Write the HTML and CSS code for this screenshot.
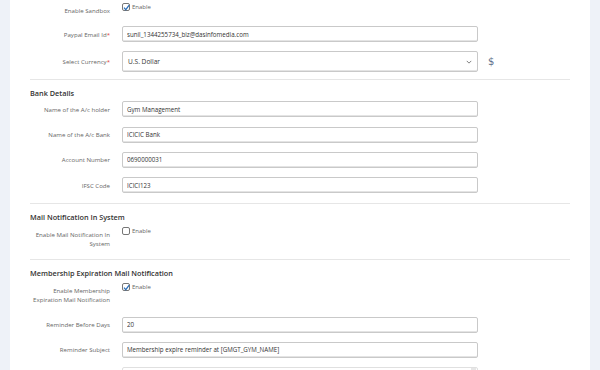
FILE: index.html
```html
<!DOCTYPE html>
<html>
<head>
<meta charset="utf-8">
<link rel="stylesheet" href="styles.css">
</head>
<body>
<div class="page">
  <div class="panel">
    <div class="row row-top">
      <label class="lbl lbl-low">Enable Sandbox</label>
      <div class="check"><span class="box checked"><svg viewBox="0 0 10 10"><path d="M2.2 5.2 L4.2 7.4 L8 2.4" /></svg></span><span class="ctext">Enable</span></div>
    </div>
    <div class="row">
      <label class="lbl">Paypal Email Id<span class="req">*</span></label>
      <div class="ctl"><input class="inp" type="text" value="sunil_1344255734_biz@dasinfomedia.com"></div>
    </div>
    <div class="row row-select">
      <label class="lbl">Select Currency<span class="req">*</span></label>
      <div class="ctl"><div class="sel"><span>U.S. Dollar</span><svg class="chev" viewBox="0 0 8 5"><path d="M1 1 L4 4 L7 1"/></svg></div></div>
      <span class="dollar">$</span>
    </div>
    <div class="sep"></div>
    <h3 class="head">Bank Details</h3>
    <div class="row">
      <label class="lbl">Name of the A/c holder</label>
      <div class="ctl"><input class="inp" type="text" value="Gym Management"></div>
    </div>
    <div class="row">
      <label class="lbl">Name of the A/c Bank</label>
      <div class="ctl"><input class="inp" type="text" value="ICICIC Bank"></div>
    </div>
    <div class="row">
      <label class="lbl">Account Number</label>
      <div class="ctl"><input class="inp" type="text" value="0690000031"></div>
    </div>
    <div class="row">
      <label class="lbl">IFSC Code</label>
      <div class="ctl"><input class="inp" type="text" value="ICICI123"></div>
    </div>
    <div class="sep"></div>
    <h3 class="head">Mail Notification In System</h3>
    <div class="row row-check2">
      <label class="lbl lbl-two">Enable Mail Notification In System</label>
      <div class="check check2"><span class="box"></span><span class="ctext">Enable</span></div>
    </div>
    <div class="sep"></div>
    <h3 class="head">Membership Expiration Mail Notification</h3>
    <div class="row row-check2 row-check3">
      <label class="lbl lbl-two">Enable Membership Expiration Mail Notification</label>
      <div class="check check2"><span class="box checked"><svg viewBox="0 0 10 10"><path d="M2.2 5.2 L4.2 7.4 L8 2.4" /></svg></span><span class="ctext">Enable</span></div>
    </div>
    <div class="row">
      <label class="lbl">Reminder Before Days</label>
      <div class="ctl"><input class="inp" type="text" value="20"></div>
    </div>
    <div class="row">
      <label class="lbl">Reminder Subject</label>
      <div class="ctl"><input class="inp" type="text" value="Membership expire reminder at [GMGT_GYM_NAME]"></div>
    </div>
    <div class="row row-area">
      <label class="lbl"></label>
      <div class="ctl"><div class="area"><span class="scroll"></span></div></div>
    </div>
  </div>
</div>
</body>
</html>
```

FILE: styles.css
```css
* { box-sizing: border-box; }
html, body { margin: 0; padding: 0; }
body {
  background: #eef2f8;
  font-family: "Open Sans", "Liberation Sans", sans-serif;
  color: #333;
  width: 600px;
  height: 370px;
  overflow: hidden;
}
.page { padding-left: 10px; width: 590px; }
.panel {
  background: #fff;
  width: 580px;
  height: 370px;
  overflow: hidden;
  padding: 0 20px;
}
.row {
  display: flex;
  align-items: center;
  height: 16px;
  margin-bottom: 9.33px;
}
.row-top {
  height: 17px;
  margin-bottom: 9px;
  align-items: flex-start;
}
.row-top .check { margin-top: 2px; }
.lbl {
  width: 92px;
  flex: 0 0 92px;
  padding-right: 12px;
  text-align: right;
  font-size: 6.1px;
  color: #666;
  line-height: 9px;
}
.lbl-low { padding-top: 6px; }
.req { color: #e0413a; }
.ctl { width: 356px; flex: 0 0 356px; }
.inp {
  display: block;
  width: 100%;
  height: 16px;
  border: 1px solid #c9c9c9;
  border-radius: 2px;
  padding: 0 4px;
  font-family: inherit;
  font-size: 6.2px;
  color: #333;
  background: #fff;
  outline: none;
  box-shadow: inset 0 -1px 0 #e4e4e4;
}
.row-select { height: 21px; margin-bottom: 7px; }
.sel {
  height: 21px;
  border: 1px solid #c9c9c9;
  border-radius: 2px;
  display: flex;
  align-items: center;
  justify-content: space-between;
  padding: 0 5px;
  font-size: 6.6px;
  color: #333;
  box-shadow: inset 0 -1px 0 #e4e4e4;
}
.chev { width: 6px; height: 4px; fill: none; stroke: #666; stroke-width: 1.1; }
.dollar {
  margin-left: 10px;
  font-size: 10px;
  color: #5f708a;
  font-family: "DejaVu Sans", sans-serif;
}
.sep {
  border-top: 1px solid #e6e6e6;
  height: 0;
  margin: 0 0 6px 0;
}
.head {
  margin: 0 0 1px 0;
  font-size: 7.3px;
  font-weight: 600;
  color: #333;
  line-height: 14px;
}
.check { display: flex; align-items: center; height: 9px; }
.box {
  width: 8px;
  height: 8px;
  border: 1px solid #777;
  border-radius: 2px;
  background: #fff;
  display: inline-block;
  position: relative;
}
.box svg {
  position: absolute;
  left: -1px;
  top: -1px;
  width: 9px;
  height: 9px;
  fill: none;
  stroke: #2c6fb8;
  stroke-width: 1.4;
}
.ctext { margin-left: 2px; font-size: 6px; color: #666; }
.row-check2 {
  height: 23px;
  align-items: flex-start;
  margin-bottom: 11px;
}
.check2 { margin-top: 2px; }
.lbl-two { padding-top: 5px; }
.row-check3 { margin-bottom: 13px; }
.row-area { height: auto; align-items: flex-start; }
.area {
  height: 30px;
  border: 1px solid #e0e0e0;
  border-radius: 2px;
  position: relative;
}
.scroll {
  position: absolute;
  right: 1px;
  top: 0;
  width: 5px;
  height: 6px;
  background: #e6e6e6;
}
```
